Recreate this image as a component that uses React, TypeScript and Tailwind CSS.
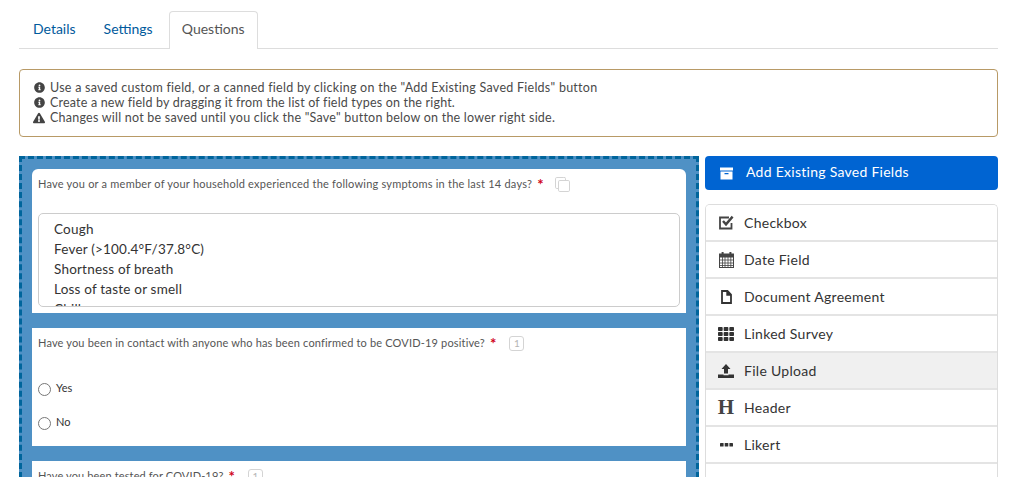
import React from "react";
import { FaInfoCircle, FaExclamationTriangle, FaTh } from "react-icons/fa";

const font = { fontFamily: '"Lato","Open Sans",sans-serif' };

function ArchiveIcon() {
  return (
    <svg width="13" height="13" viewBox="0 0 13 13" fill="#fff">
      <rect x="0" y="0.5" width="13" height="3" />
      <path fillRule="evenodd" d="M0.5 4.5h12V12.5H0.5z M4.5 6v1.2h4V6z" />
    </svg>
  );
}
function CheckIcon() {
  return (
    <svg width="15" height="15" viewBox="0 0 15 15" fill="none" stroke="#444">
      <path d="M12.5 8v5.5H1V2.5h9" strokeWidth="1.8" />
      <path d="M4 6 7 9.4 13.6 1.6" strokeWidth="2.4" />
    </svg>
  );
}
function CalendarIcon() {
  return (
    <svg width="15" height="16" viewBox="0 0 15 16" fill="none" stroke="#444" strokeWidth="1">
      <rect x="0.5" y="2.5" width="14" height="13" />
      <rect x="0.5" y="2" width="14" height="3" fill="#444" />
      <path d="M0.5 8h14M0.5 11h14M0.5 13.5h14M3.5 5v10M6 5v10M9 5v10M11.8 5v10" strokeWidth="0.8" />
      <rect x="2.6" y="0" width="2" height="4" fill="#444" stroke="none" />
      <rect x="10.4" y="0" width="2" height="4" fill="#444" stroke="none" />
    </svg>
  );
}
function DocIcon() {
  return (
    <svg width="11" height="14" viewBox="0 0 11 14" fill="none" stroke="#333" strokeWidth="1.8">
      <path d="M1 1h5.5L10 4.5V13H1z" />
      <path d="M6 1v4h4" strokeWidth="1.4" fill="#333" />
    </svg>
  );
}
function UploadIcon() {
  return (
    <svg width="16" height="14" viewBox="0 0 16 14" fill="#333">
      <path d="M8 0 12.5 5H10v4.5H6V5H3.5z" />
      <path d="M0 10.5h5.5v.7h5v-.7H16V14H0z" />
    </svg>
  );
}
function DotsIcon() {
  return (
    <svg width="13" height="4" viewBox="0 0 13 4" fill="#333">
      <rect x="0" y="0" width="3.6" height="3.6" rx="0.6" />
      <rect x="4.7" y="0" width="3.6" height="3.6" rx="0.6" />
      <rect x="9.4" y="0" width="3.6" height="3.6" rx="0.6" />
    </svg>
  );
}
function CopyIcon() {
  return (
    <svg width="15" height="15" viewBox="0 0 15 15" fill="none" stroke="#d4d4d4" strokeWidth="1">
      <path d="M3 11.5H1.8A1.3 1.3 0 0 1 .5 10.2V1.8A1.3 1.3 0 0 1 1.8.5h7A1.3 1.3 0 0 1 10.5 1.8V3" />
      <rect x="3.5" y="3.5" width="11" height="11" rx="1.3" />
    </svg>
  );
}

function Badge() {
  return (
    <span className="ml-[13px] flex h-[15px] w-[15px] items-center justify-center rounded-[3px] border border-[#d4d4d4] text-[10px] leading-none text-[#b5b5b5]">1</span>
  );
}
function Req() {
  return <span className="ml-[5px] text-[15px] font-bold leading-none text-[#d0021b]">*</span>;
}

function Radio({ label }: { label: string }) {
  return (
    <div className="flex h-[34px] items-center">
      <span className="h-[13px] w-[13px] rounded-full border border-[#777] bg-white" />
      <span className="ml-[5px] -mt-[2px] text-[11px] text-[#333]">{label}</span>
    </div>
  );
}

const fields: [React.ReactNode, string, boolean?][] = [
  [<CheckIcon />, "Checkbox"],
  [<CalendarIcon />, "Date Field"],
  [<DocIcon />, "Document Agreement"],
  [<FaTh size={16} color="#333" />, "Linked Survey"],
  [<UploadIcon />, "File Upload", true],
  [<span className="text-[21px] font-bold leading-none text-[#444]" style={{ fontFamily: '"Liberation Serif",serif' }}>H</span>, "Header"],
  [<DotsIcon />, "Likert"],
  [<span />, "Matrix"],
];

export default function App() {
  return (
    <div className="h-[477px] w-[1016px] overflow-hidden bg-white pl-[19px] pr-[18px] pt-[11px] text-[#333]" style={font}>
      <div className="flex h-[38px] border-b border-[#dddddd] text-[14px]">
        <div className="flex h-[35px] items-center px-[14px] text-[#005a9c]">Details</div>
        <div className="flex h-[35px] items-center px-[14px] text-[#005a9c]">Settings</div>
        <div className="ml-[2px] flex h-[38px] w-[89px] items-start justify-center rounded-t-[4px] border border-b-0 border-[#dddddd] bg-white pt-[6px] text-[#555]">Questions</div>
      </div>

      <div className="mt-[20px] h-[68px] rounded-[4px] border border-[#b89a66] py-[10px] pl-[13px] text-[12.5px] leading-[15px] text-[#4a4a4a]">
        <div className="flex items-center gap-[5px] tracking-[0.26px]"><span className="flex w-[12px] justify-center"><FaInfoCircle size={11} color="#444" /></span>Use a saved custom field, or a canned field by clicking on the "Add Existing Saved Fields" button</div>
        <div className="flex items-center gap-[5px] tracking-[0.19px]"><span className="flex w-[12px] justify-center"><FaInfoCircle size={11} color="#444" /></span>Create a new field by dragging it from the list of field types on the right.</div>
        <div className="flex items-center gap-[5px] tracking-[0.23px]"><span className="flex w-[12px] justify-center"><FaExclamationTriangle size={12} color="#444" /></span>Changes will not be saved until you click the "Save" button below on the lower right side.</div>
      </div>

      <div className="mt-[19px] flex gap-[6px]">
        <div className="flex h-[340px] w-[680px] shrink-0 flex-col gap-[15px] border-[3px] border-dashed border-[#00659c] bg-[#4f91c5] px-[10px] pt-[10px]">
          <div className="h-[144px] shrink-0 rounded-t-[6px] bg-white px-[6px] pt-[8px]">
            <div className="flex h-[14px] items-center text-[11px] tracking-[0.22px] text-[#555]">
              Have you or a member of your household experienced the following symptoms in the last 14 days?<Req />
              <span className="ml-[11px]"><CopyIcon /></span>
            </div>
            <div className="mt-[22px] h-[94px] overflow-hidden rounded-[5px] border border-[#cccccc] pl-[15px] pt-[5px] text-[13.5px] leading-[20px] tracking-[0.2px] text-[#333]">
              <div>Cough</div>
              <div>Fever (&gt;100.4°F/37.8°C)</div>
              <div>Shortness of breath</div>
              <div>Loss of taste or smell</div>
              <div>Chills</div>
            </div>
          </div>
          <div className="h-[118px] shrink-0 bg-white px-[6px] pt-[8px]">
            <div className="flex h-[14px] items-center text-[11px] tracking-[0.165px] text-[#555]">
              Have you been in contact with anyone who has been confirmed to be COVID-19 positive?<Req /><Badge />
            </div>
            <div className="mt-[22px] flex flex-col">
              <Radio label="Yes" />
              <Radio label="No" />
            </div>
          </div>
          <div className="h-[40px] shrink-0 bg-white px-[6px] pt-[8px]">
            <div className="flex h-[14px] items-center text-[11px] tracking-[0.13px] text-[#555]">
              Have you been tested for COVID-19?<Req /><Badge />
            </div>
          </div>
        </div>

        <div className="w-[293px] shrink-0">
          <div className="flex h-[34px] items-center rounded-[4px] bg-[#0064d2] pl-[15px] text-[14px] tracking-[0.27px] text-white">
            <ArchiveIcon />
            <span className="ml-[13px] -mt-[3px]">Add Existing Saved Fields</span>
          </div>
          <div className="mt-[14px] overflow-hidden rounded-t-[5px] border-x border-t border-[#dddddd]">
            {fields.map(([icon, label, active]) => (
              <div key={label} className={`flex h-[37px] items-center border-b-2 border-[#e4e4e4] text-[14px] tracking-[0.28px] text-[#333] ${active ? "bg-[#f0f0f0]" : "bg-white"}`}>
                <span className="flex w-[38px] shrink-0 justify-center pl-[2px]">{icon}</span>
                {label}
              </div>
            ))}
          </div>
        </div>
      </div>
    </div>
  );
}
